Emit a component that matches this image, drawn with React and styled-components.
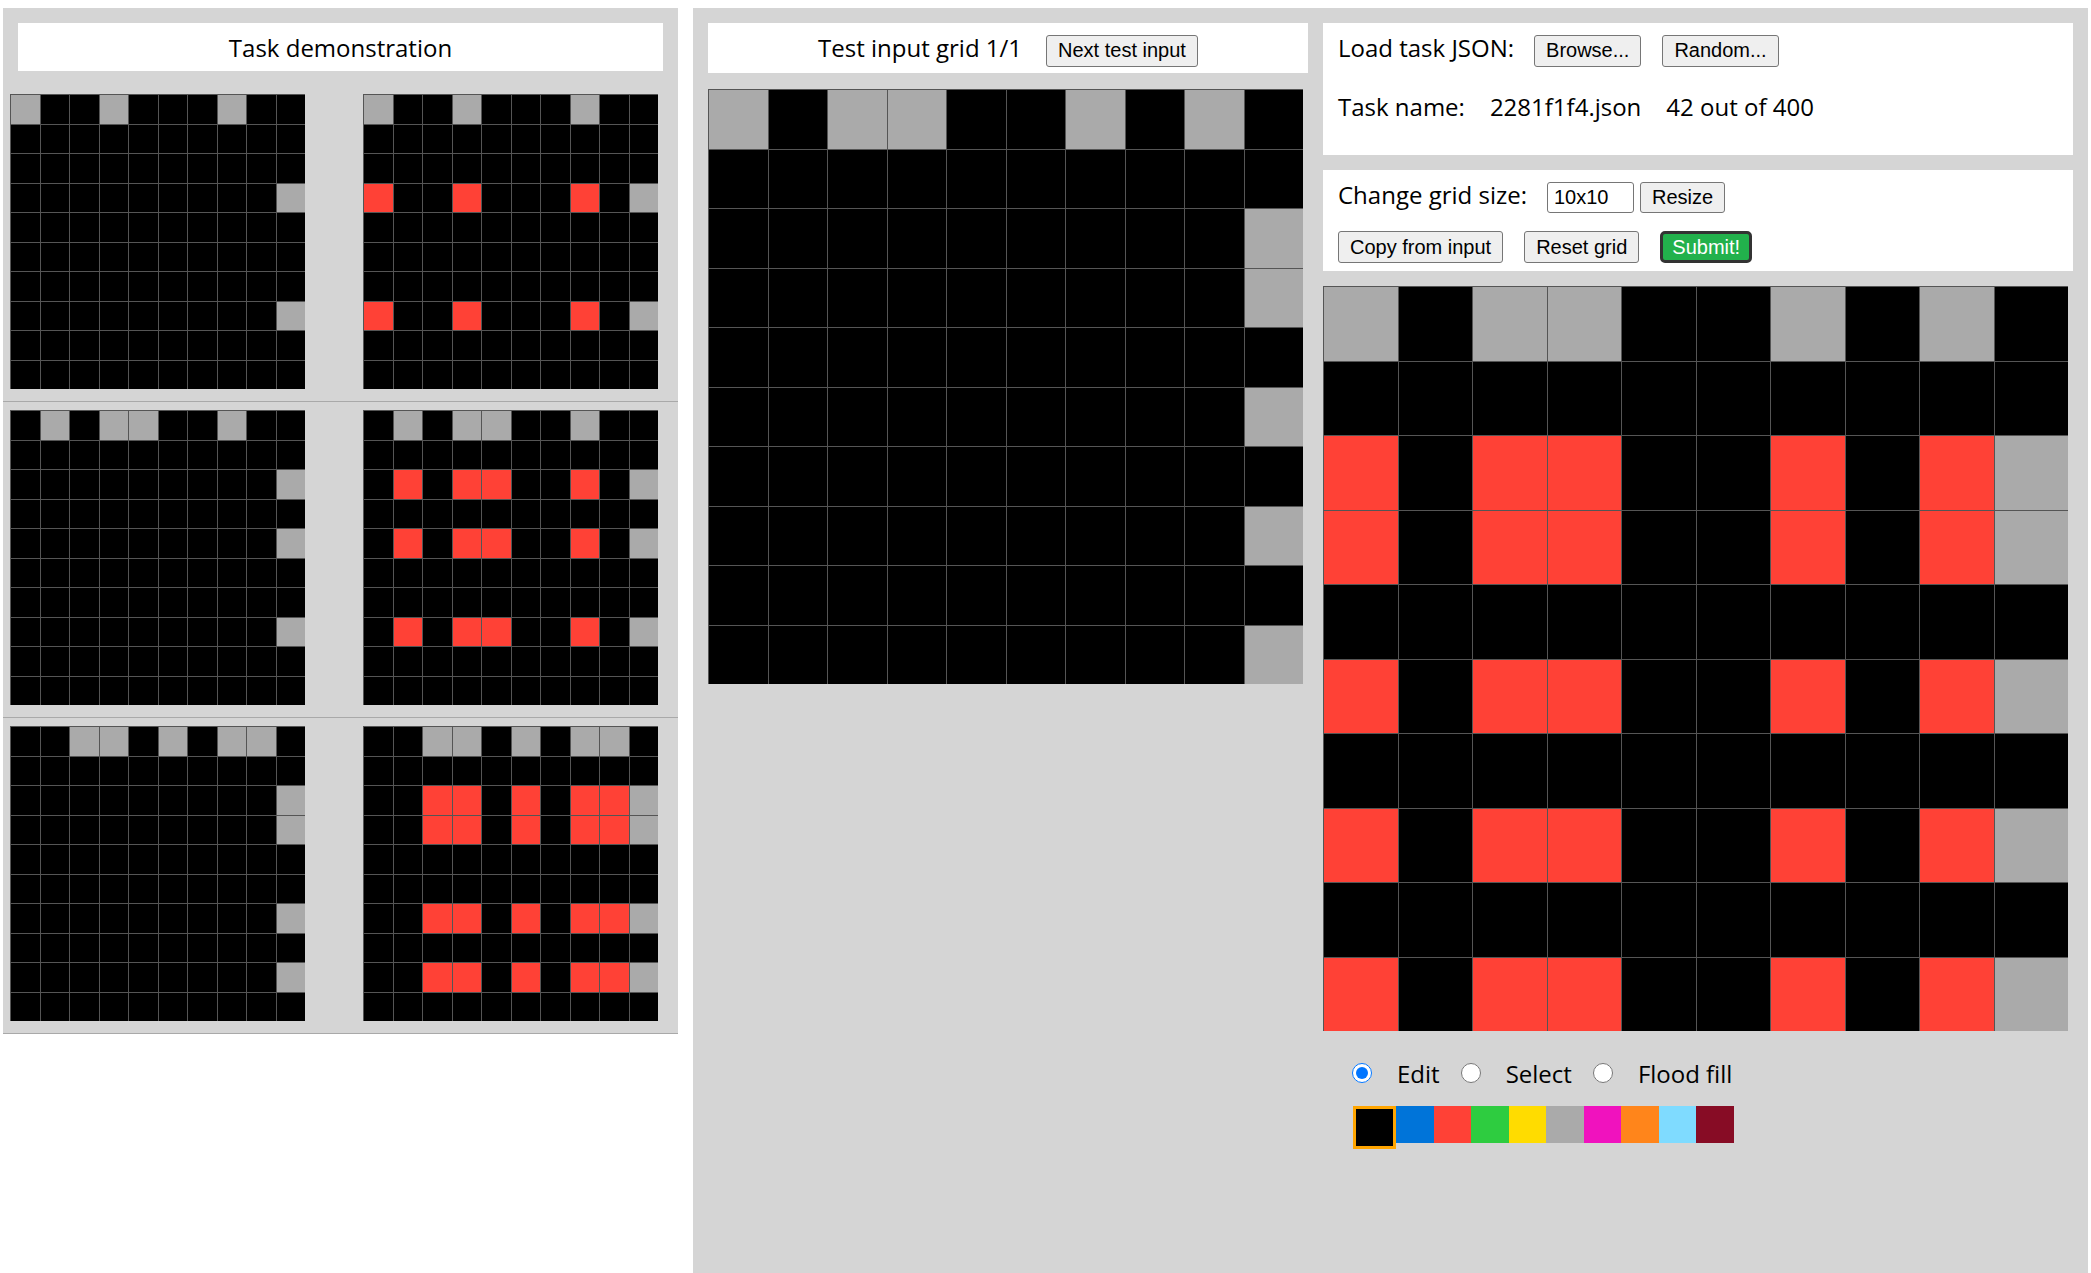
import React from "react";
import styled, { createGlobalStyle } from "styled-components";

// ARC palette, index = symbol
const COLORS = [
  "#000000",
  "#0074D9",
  "#FF4136",
  "#2ECC40",
  "#FFDC00",
  "#AAAAAA",
  "#F012BE",
  "#FF851B",
  "#7FDBFF",
  "#870C25",
];

const blank = () => Array.from({ length: 10 }, () => Array(10).fill(0));

// gray markers on the top row and right column, red where they cross
const makePair = (topCols, rightRows) => {
  const input = blank();
  const output = blank();
  topCols.forEach((c) => {
    input[0][c] = 5;
    output[0][c] = 5;
  });
  rightRows.forEach((r) => {
    input[r][9] = 5;
    output[r][9] = 5;
    topCols.forEach((c) => (output[r][c] = 2));
  });
  return { input, output };
};

const pairs = [
  makePair([0, 3, 7], [3, 7]),
  makePair([1, 3, 4, 7], [2, 4, 7]),
  makePair([2, 3, 5, 7, 8], [2, 3, 6, 8]),
];
const testPair = makePair([0, 2, 3, 6, 8], [2, 3, 5, 7, 9]);

const GlobalStyle = createGlobalStyle`
  html, body {
    margin: 0;
    padding: 0;
    background: #fff;
  }
  body {
    font-family: "Open Sans", "Noto Sans", sans-serif;
    color: #000;
  }
`;

const Grid = ({ data, size }) => (
  <GridBox $size={size}>
    {data.flat().map((v, i) => (
      <Cell key={i} $color={COLORS[v]} />
    ))}
  </GridBox>
);

const App = () => {
  return (
    <>
      <GlobalStyle />
      <Page>
        <DemoPanel>
          <DemoTitle>Task demonstration</DemoTitle>
          {pairs.map((p, i) => (
            <PairRow key={i}>
              <Grid data={p.input} size={295} />
              <Grid data={p.output} size={295} />
            </PairRow>
          ))}
        </DemoPanel>

        <EvalPanel>
          <TestColumn>
            <TestTitle>
              <span>Test input grid 1/1</span>
              <Button>Next test input</Button>
            </TestTitle>
            <TestGridWrap>
              <Grid data={testPair.input} size={595} />
            </TestGridWrap>
          </TestColumn>

          <OutputColumn>
            <InfoBox>
              <ControlRow>
                <Label>Load task JSON:</Label>
                <Button>Browse...</Button>
                <Button>Random...</Button>
              </ControlRow>
              <NameRow>
                <span>Task name:</span>
                <span>2281f1f4.json</span>
                <span>42 out of 400</span>
              </NameRow>
            </InfoBox>

            <ToolsBox>
              <ControlRow>
                <Label>Change grid size:</Label>
                <SizeGroup>
                  <SizeInput defaultValue="10x10" />
                  <Button $short>Resize</Button>
                </SizeGroup>
              </ControlRow>
              <ActionRow>
                <Button>Copy from input</Button>
                <Button>Reset grid</Button>
                <SubmitButton>Submit!</SubmitButton>
              </ActionRow>
            </ToolsBox>

            <OutputGridWrap>
              <Grid data={testPair.output} size={745} />
            </OutputGridWrap>

            <ModeRow>
              <ModeOption>
                <Radio type="radio" name="mode" defaultChecked />
                <span>Edit</span>
              </ModeOption>
              <ModeOption>
                <Radio type="radio" name="mode" />
                <span>Select</span>
              </ModeOption>
              <ModeOption>
                <Radio type="radio" name="mode" />
                <span>Flood fill</span>
              </ModeOption>
            </ModeRow>

            <Palette>
              {COLORS.map((c, i) => (
                <Swatch key={c} $color={c} $selected={i === 0} />
              ))}
            </Palette>
          </OutputColumn>
        </EvalPanel>
      </Page>
    </>
  );
};

export default App;

const Page = styled.div`
  display: flex;
  align-items: flex-start;
  gap: 15px;
  padding: 8px 3px 0;
`;

const DemoPanel = styled.div`
  width: 675px;
  flex-shrink: 0;
  background: #d5d5d5;
`;

const DemoTitle = styled.div`
  margin: 15px;
  height: 48px;
  box-sizing: border-box;
  padding-top: 2px;
  background: #fff;
  text-align: center;
  font-size: 24px;
  line-height: 46px;
`;

const PairRow = styled.div`
  display: flex;
  gap: 58px;
  padding: 8px 20px 12px 7px;
  border-bottom: 1px solid #a9a9a9;
`;

const GridBox = styled.div`
  width: ${(p) => p.$size}px;
  height: ${(p) => p.$size}px;
  flex-shrink: 0;
  display: grid;
  grid-template-columns: repeat(10, 1fr);
  grid-template-rows: repeat(10, 1fr);
`;

const Cell = styled.div`
  background: ${(p) => p.$color};
  border-top: 1px solid #555;
  border-left: 1px solid #555;
`;

const EvalPanel = styled.div`
  width: 1395px;
  min-height: 1265px;
  box-sizing: border-box;
  flex-shrink: 0;
  display: flex;
  align-items: flex-start;
  gap: 15px;
  padding: 15px;
  background: #d5d5d5;
`;

const TestColumn = styled.div`
  width: 600px;
  flex-shrink: 0;
`;

const TestTitle = styled.div`
  height: 50px;
  box-sizing: border-box;
  padding-top: 8px;
  display: flex;
  align-items: baseline;
  justify-content: center;
  gap: 24px;
  background: #fff;
  font-size: 24px;
`;

const TestGridWrap = styled.div`
  margin-top: 16px;
`;

const OutputColumn = styled.div`
  width: 750px;
  flex-shrink: 0;
`;

const InfoBox = styled.div`
  height: 132px;
  box-sizing: border-box;
  padding: 8px 15px 0;
  background: #fff;
  font-size: 24px;
`;

const ToolsBox = styled.div`
  height: 101px;
  box-sizing: border-box;
  margin-top: 15px;
  padding: 8px 15px 0;
  background: #fff;
  font-size: 24px;
`;

const ControlRow = styled.div`
  display: flex;
  align-items: baseline;
  gap: 21px;
`;

const Label = styled.span`
  margin-right: -1px;
`;

const NameRow = styled.div`
  display: flex;
  gap: 25px;
  margin-top: 23px;
`;

const SizeGroup = styled.div`
  display: flex;
  align-items: baseline;
  gap: 6px;
`;

const ActionRow = styled.div`
  display: flex;
  gap: 21px;
  margin-top: 18px;
`;

const Button = styled.button`
  height: ${(p) => (p.$short ? 31 : 32)}px;
  box-sizing: border-box;
  padding: 0 11px;
  background: #efefef;
  border: 1px solid #767676;
  border-radius: 3px;
  font-family: "Liberation Sans", Arial, sans-serif;
  font-size: 20px;
  color: #000;
  cursor: pointer;
`;

const SubmitButton = styled.button`
  height: 32px;
  box-sizing: border-box;
  padding: 0 9px;
  background: #22b14c;
  border: 3px solid #333;
  border-radius: 5px;
  font-family: "Liberation Sans", Arial, sans-serif;
  font-size: 20px;
  color: #fff;
  cursor: pointer;
`;

const SizeInput = styled.input`
  width: 87px;
  height: 31px;
  box-sizing: border-box;
  padding: 0 6px;
  border: 1px solid #767676;
  border-radius: 3px;
  font-family: "Liberation Sans", Arial, sans-serif;
  font-size: 20px;
  color: #000;
`;

const OutputGridWrap = styled.div`
  margin-top: 15px;
`;

const ModeRow = styled.div`
  display: flex;
  align-items: center;
  gap: 21px;
  margin-top: 26px;
  padding-left: 29px;
  height: 32px;
  font-size: 24px;
`;

const ModeOption = styled.label`
  display: flex;
  align-items: center;
  gap: 25px;
`;

const Radio = styled.input`
  width: 20px;
  height: 20px;
  margin: 0;
  accent-color: #0075ff;
`;

const Palette = styled.div`
  display: flex;
  align-items: flex-start;
  margin-top: 17px;
  padding-left: 30px;
`;

const Swatch = styled.div`
  width: ${(p) => (p.$selected ? 37 : 37.5)}px;
  height: 37px;
  flex-shrink: 0;
  background: ${(p) => p.$color};
  border: ${(p) => (p.$selected ? "3px solid #ffa500" : "none")};
`;
